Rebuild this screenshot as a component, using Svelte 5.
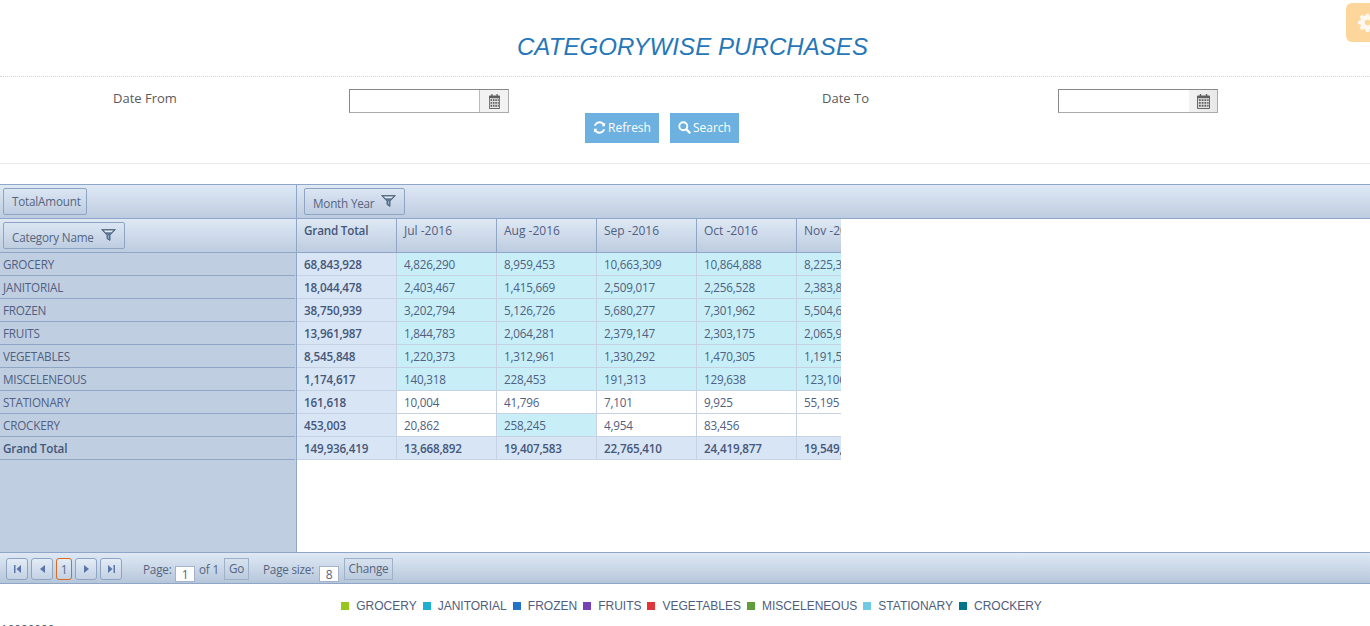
<script>
  const months = ['Jul -2016', 'Aug -2016', 'Sep -2016', 'Oct -2016', 'Nov -2016'];
  const rows = [
    { name: 'GROCERY', total: '68,843,928', vals: ['4,826,290', '8,959,453', '10,663,309', '10,864,888', '8,225,312'], hot: [1, 1, 1, 1, 1] },
    { name: 'JANITORIAL', total: '18,044,478', vals: ['2,403,467', '1,415,669', '2,509,017', '2,256,528', '2,383,845'], hot: [1, 1, 1, 1, 1] },
    { name: 'FROZEN', total: '38,750,939', vals: ['3,202,794', '5,126,726', '5,680,277', '7,301,962', '5,504,612'], hot: [1, 1, 1, 1, 1] },
    { name: 'FRUITS', total: '13,961,987', vals: ['1,844,783', '2,064,281', '2,379,147', '2,303,175', '2,065,934'], hot: [1, 1, 1, 1, 1] },
    { name: 'VEGETABLES', total: '8,545,848', vals: ['1,220,373', '1,312,961', '1,330,292', '1,470,305', '1,191,523'], hot: [1, 1, 1, 1, 1] },
    { name: 'MISCELENEOUS', total: '1,174,617', vals: ['140,318', '228,453', '191,313', '129,638', '123,106'], hot: [1, 1, 1, 1, 1] },
    { name: 'STATIONARY', total: '161,618', vals: ['10,004', '41,796', '7,101', '9,925', '55,195'], hot: [0, 0, 0, 0, 0] },
    { name: 'CROCKERY', total: '453,003', vals: ['20,862', '258,245', '4,954', '83,456', ''], hot: [0, 1, 0, 0, 0] }
  ];
  const totals = ['13,668,892', '19,407,583', '22,765,410', '24,419,877', '19,549,120'];
  const legend = [
    ['GROCERY', '#9ac71f'], ['JANITORIAL', '#1fb0cf'], ['FROZEN', '#2272c9'], ['FRUITS', '#7342b5'],
    ['VEGETABLES', '#e0363a'], ['MISCELENEOUS', '#5f9e3a'], ['STATIONARY', '#6fcbe4'], ['CROCKERY', '#00758a']
  ];
</script>

{#snippet calendar()}
  <svg class="cal" viewBox="0 0 14 16" preserveAspectRatio="none" aria-hidden="true">
    <path fill="#5f5f5f" d="M1 1.500h2V0h1.500v1.500h5V0H11v1.500h2a1 1 0 0 1 1 1V15a1 1 0 0 1-1 1H1a1 1 0 0 1-1-1V2.500a1 1 0 0 1 1-1z"/>
    <path fill="#e6e6e6" d="M1 4.500h12V15H1z"/>
    <path fill="#5f5f5f" d="M2 5.500h2v2H2zM5 5.500h2v2H5zM8 5.500h2v2H8zM11 5.500h1.500v2H11zM2 8.500h2v2H2zM5 8.500h2v2H5zM8 8.500h2v2H8zM11 8.500h1.500v2H11zM2 11.500h2v2H2zM5 11.500h2v2H5zM8 11.500h2v2H8zM11 11.500h1.500v2H11z"/>
  </svg>
{/snippet}

{#snippet funnel()}
  <svg class="funnel" viewBox="0 0 15 12" width="15" height="12" aria-hidden="true">
    <path fill="#5f7591" stroke="#556a84" stroke-width="1" stroke-linejoin="round" d="M.6.6h13.800L9 6.200V11.400L6 9.600V6.200z"/>
    <path fill="#e3ebf3" d="M2.600 1.500h9.800L10.400 3.200H4.600z"/>
    <path fill="#8fb0c6" d="M7 6.200h1v3.500L7 9.100z"/>
  </svg>
{/snippet}

<div class="page">
  <button class="gear" aria-label="Settings">
    <svg viewBox="0 0 24 24" width="19" height="19" aria-hidden="true">
      <path fill="#fff" fill-rule="evenodd" d="M10 1h4l.6 3.100 1.800.8 2.700-1.800 2.800 2.800-1.800 2.700.8 1.800L24 10v4l-3.100.6-.8 1.800 1.800 2.700-2.800 2.800-2.700-1.800-1.800.8L14 24h-4l-.6-3.100-1.800-.8-2.700 1.800-2.800-2.800 1.800-2.700-.8-1.800L0 14v-4l3.100-.6.800-1.800-1.800-2.700 2.800-2.800 2.700 1.800 1.800-.8zM12 8.500a3.500 3.500 0 1 0 0 7 3.500 3.500 0 0 0 0-7z"/>
    </svg>
  </button>

  <h1>CATEGORYWISE PURCHASES</h1>

  <section class="filters">
    <div class="filter-row">
      <span class="lbl">Date From</span>
      <div class="date"><span class="field"></span><span class="pick">{@render calendar()}</span></div>
      <span class="lbl">Date To</span>
      <div class="date"><span class="field"></span><span class="pick flat">{@render calendar()}</span></div>
    </div>
    <div class="actions">
      <button class="act">
        <svg viewBox="0 0 14 14" width="13" height="13" aria-hidden="true">
          <path fill="#fff" d="M12.800 5.700H9.200l1.400-1.400A4.400 4.400 0 0 0 3 5H1a6.300 6.300 0 0 1 11-2.300L13.200 1.500zM1.200 8.300h3.600L3.400 9.700A4.400 4.400 0 0 0 11 9h2a6.300 6.300 0 0 1-11 2.300L.800 12.500z"/>
        </svg>
        Refresh
      </button>
      <button class="act">
        <svg viewBox="0 0 14 14" width="13" height="13" aria-hidden="true">
          <circle cx="5.700" cy="5.700" r="4.300" fill="none" stroke="#fff" stroke-width="2"/>
          <path stroke="#fff" stroke-width="2.400" stroke-linecap="round" d="M9 9l3.500 3.500"/>
        </svg>
        Search
      </button>
    </div>
  </section>

  <section class="pivot">
    <div class="top">
      <div class="corner"><button class="chip">TotalAmount</button></div>
      <div class="colzone"><button class="chip lower">Month Year {@render funnel()}</button></div>
    </div>
    <div class="body">
      <div class="side">
        <div class="rowhead"><button class="chip lower">Category Name {@render funnel()}</button></div>
        {#each rows as r}
          <div class="rl">{r.name}</div>
        {/each}
        <div class="rl strong">Grand Total</div>
      </div>
      <div class="data">
        <table>
          <thead>
            <tr>
              <th class="gt">Grand Total</th>
              {#each months as m}<th>{m}</th>{/each}
            </tr>
          </thead>
          <tbody>
            {#each rows as r}
              <tr>
                <td class="tot">{r.total}</td>
                {#each r.vals as v, i}
                  <td class:hot={r.hot[i]}>{v}</td>
                {/each}
              </tr>
            {/each}
            <tr>
              <td class="tot">149,936,419</td>
              {#each totals as t}<td class="tot">{t}</td>{/each}
            </tr>
          </tbody>
        </table>
      </div>
    </div>
    <div class="pager">
      <div class="nav">
        <button class="pg" aria-label="First"><svg viewBox="0 0 7 8" width="7" height="8"><path fill="#5a76a8" d="M0 0h1.500v8H0zM7 0v8L2.500 4z"/></svg></button>
        <button class="pg" aria-label="Previous"><svg viewBox="0 0 5 8" width="5" height="8"><path fill="#5a76a8" d="M5 0v8L0 4z"/></svg></button>
        <button class="pg cur">1</button>
        <button class="pg" aria-label="Next"><svg viewBox="0 0 5 8" width="5" height="8"><path fill="#5a76a8" d="M0 0v8l5-4z"/></svg></button>
        <button class="pg" aria-label="Last"><svg viewBox="0 0 7 8" width="7" height="8"><path fill="#5a76a8" d="M0 0v8l4.500-4zM5.500 0H7v8H5.500z"/></svg></button>
      </div>
      <span class="p1">Page:</span>
      <span class="num">1</span>
      <span class="p2">of 1</span>
      <button class="sq go">Go</button>
      <span class="p3">Page size:</span>
      <span class="num">8</span>
      <button class="sq change">Change</button>
    </div>
  </section>

  <div class="legend">
    {#each legend as [name, color]}
      <span class="item"><i style="background:{color}"></i>{name}</span>
    {/each}
  </div>
  <div class="axis">10000000</div>
</div>

<style>
  :global(body) { margin: 0; background: #fff; overflow: hidden; }
  .page { position: relative; width: 1370px; height: 626px; overflow: hidden; font-family: "Open Sans", sans-serif; font-size: 11.7px; letter-spacing: -.2px; color: #4a5b7c; }
  button { font-family: inherit; letter-spacing: inherit; margin: 0; cursor: default; }
  .gear { position: absolute; left: 1346px; top: 3px; width: 40px; height: 39px; border: 0; border-radius: 6px; background: #fdd69b; padding: 0 0 0 12px; display: flex; align-items: center; }
  .gear svg { opacity: .85; }
  h1 { margin: 0; height: 77px; box-sizing: border-box; padding: 32px 0 0 15px; text-align: center; font: italic 400 24px/30px "Liberation Sans", Arial, sans-serif; letter-spacing: .08px; color: #2577b9; border-bottom: 1px dotted #d4d4d4; }
  .filters { height: 86px; border-bottom: 1px solid #e9e9e9; }
  .filter-row { display: grid; grid-template-columns: 236px 473px 236px 160px; padding: 12px 0 0 113px; height: 24px; }
  .lbl { font-size: 13px; letter-spacing: 0; line-height: 18px; color: #5a5a5a; }
  .date { display: flex; width: 160px; height: 24px; box-sizing: border-box; border: 1px solid #aaa; border-top-color: #888; border-left-color: #888; }
  .field { flex: 1; background: #fff; }
  .pick { width: 28px; display: flex; align-items: center; justify-content: center; background: #f2f2f2; border-left: 1px solid #bbb; }
  .pick .cal { width: 11px; height: 15px; }
  .pick.flat { border-left: 0; background: linear-gradient(90deg, #f2f2f2, #e8e8e8); }
  .pick.flat .cal { width: 13px; }
  .actions { display: flex; justify-content: center; gap: 11px; padding-right: 46px; }
  .act { height: 30px; padding: 0 8px 2px 8px; border: 0; background: #6cb1df; color: #fff; font-size: 12px; letter-spacing: 0; display: flex; align-items: center; gap: 2px; }

  .pivot { margin-top: 20px; border-top: 1px solid #8fa6c6; }
  .top { display: flex; height: 33px; background: linear-gradient(#dfe9f5, #bdcce0); border-bottom: 1px solid #8fa6c6; }
  .corner { width: 293px; flex: none; border-right: 1px solid #8fa6c6; padding: 3px 0 0 3px; }
  .colzone { padding: 3px 0 0 7px; }
  .chip { height: 27px; padding: 0 5px 2px 8px; border: 1px solid #8fa3c2; border-radius: 2px; background: linear-gradient(#dbe6f3, #bfcde1); color: #55657f; font-size: 11.7px; display: inline-flex; align-items: center; gap: 7px; }
  .chip.lower { padding: 3px 8px 0 8px; }
  .funnel { margin-top: -4px; }

  .body { display: flex; height: 333px; }
  .side { width: 296px; flex: none; background: #bfcee0; border-right: 1px solid #8fa6c6; }
  .rowhead { height: 34px; padding: 3px 0 0 3px; box-sizing: border-box; background: linear-gradient(#dfe9f5, #bdcce0); border-bottom: 1px solid #8fa6c6; }
  .rl { height: 22px; line-height: 22px; padding-left: 3px; margin-right: 1px; border-bottom: 1px solid #8fa6c6; color: #4f6082; }
  .rl.strong { font-weight: 600; color: #45577a; }

  .data { width: 544px; overflow: hidden; flex: none; }
  table { border-collapse: separate; border-spacing: 0; table-layout: fixed; width: 600px; }
  th { height: 33px; width: 92px; padding: 0 0 0 7px; text-align: left; vertical-align: top; font-weight: 400; font-size: 12px; letter-spacing: 0; line-height: 24px; background: linear-gradient(#dfe9f5, #bdcce0); border-right: 1px solid #8fa6c6; border-bottom: 1px solid #8fa6c6; color: #4f6082; white-space: nowrap; }
  th.gt { font-weight: 600; font-size: 11.7px; letter-spacing: -.2px; line-height: 22px; color: #45577a; }
  td { height: 21px; padding: 1px 0 0 7px; box-sizing: content-box; line-height: 21px; border-right: 1px solid #c6d2e4; border-bottom: 1px solid #c6d2e4; background: #fff; color: #4f6082; white-space: nowrap; overflow: hidden; }
  td.hot { background: #c8eff7; }
  td.tot { background: #d8e5f5; font-weight: 600; color: #45577a; }

  .pager { height: 30px; display: flex; align-items: flex-start; background: linear-gradient(#dfe9f5, #b6c6da); border-top: 1px solid #8fa6c6; border-bottom: 1px solid #8fa6c6; }
  .nav { display: flex; gap: 3px; margin: 5px 0 0 6px; }
  .pg { width: 22px; height: 22px; padding: 0; border: 1px solid #8fa3c2; border-radius: 3px; background: linear-gradient(#e3ecf6, #c3d1e3); display: flex; align-items: center; justify-content: center; color: #5b6c88; font-size: 12px; }
  .pg.cur { width: 16px; border-color: #d96a1e; }
  .p1 { margin: 7px 0 0 21px; line-height: 18px; color: #55657f; width: 32px; }
  .num { width: 18px; height: 14px; margin: 13px 0 0 0; background: #fff; border: 1px solid #a4b3ca; text-align: center; line-height: 16px; color: #55657f; overflow: hidden; font-size: 12px; }
  .p2 { margin: 7px 0 0 4px; line-height: 18px; color: #55657f; width: 25px; }
  .sq { height: 22px; margin-top: 5px; padding: 0 0 3px; border: 1px solid #9fb0c9; background: transparent; color: #55657f; font-size: 11.7px; }
  .go { width: 25px; }
  .p3 { margin: 7px 0 0 14px; line-height: 18px; color: #55657f; width: 56px; }
  .change { width: 49px; margin-left: 5px; }

  .legend { display: flex; justify-content: center; height: 20px; margin-top: 12px; padding-left: 13px; gap: 6px; font: 12px/20px "Liberation Sans", Arial, sans-serif; letter-spacing: 0; color: #4f5e7e; }
  .item { display: flex; align-items: center; }
  .item i { width: 8px; height: 8px; margin-right: 7px; }
  .axis { position: absolute; left: 1px; top: 623px; font: 12px/14px "Liberation Sans", Arial, sans-serif; letter-spacing: 0; color: #4f5e7e; }
</style>
